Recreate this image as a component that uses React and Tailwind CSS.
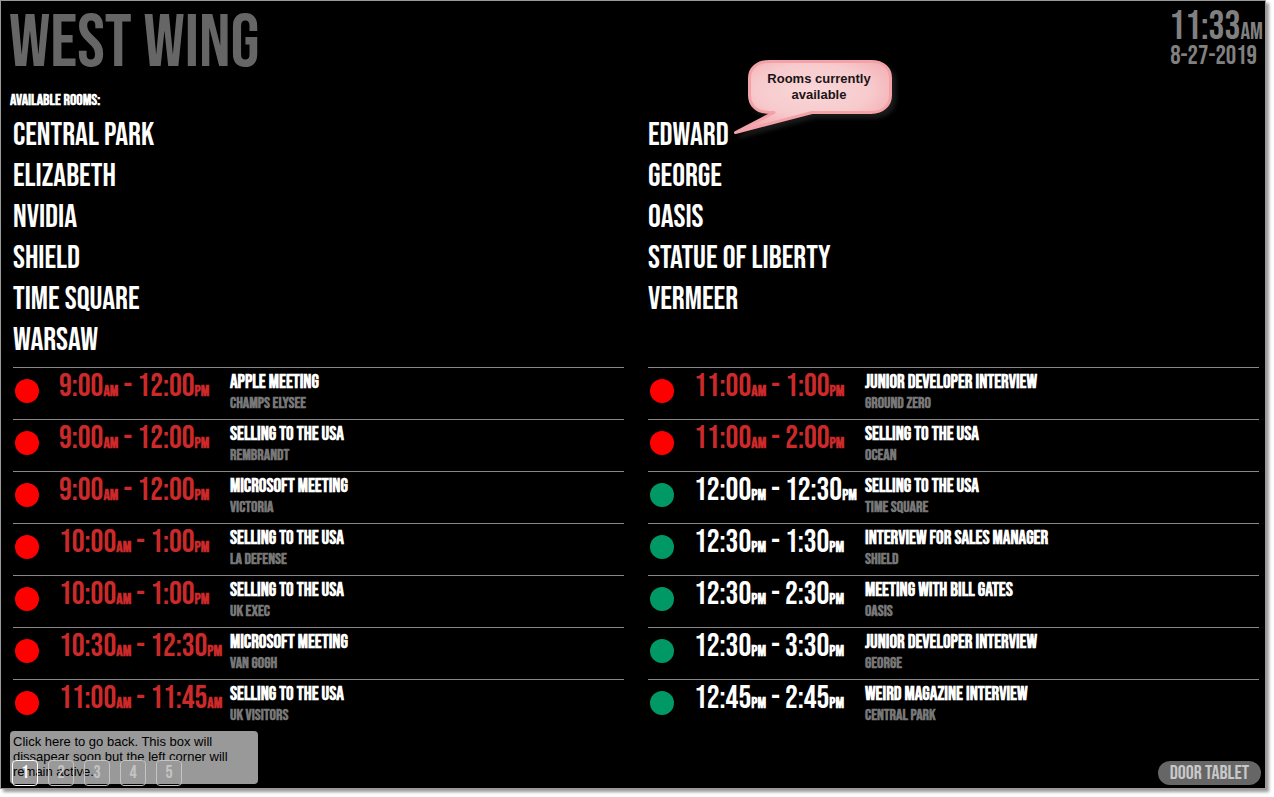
const availableRooms = [
  ['Central Park', 'Elizabeth', 'Nvidia', 'Shield', 'Time Square', 'Warsaw'],
  ['Edward', 'George', 'Oasis', 'Statue of Liberty', 'Vermeer'],
];

const meetings = [
  [
    { from: '9:00', fromHalf: 'AM', to: '12:00', toHalf: 'PM', title: 'Apple Meeting', room: 'Champs Elysee', active: true },
    { from: '9:00', fromHalf: 'AM', to: '12:00', toHalf: 'PM', title: 'Selling to the USA', room: 'Rembrandt', active: true },
    { from: '9:00', fromHalf: 'AM', to: '12:00', toHalf: 'PM', title: 'Microsoft Meeting', room: 'Victoria', active: true },
    { from: '10:00', fromHalf: 'AM', to: '1:00', toHalf: 'PM', title: 'Selling to the USA', room: 'La Defense', active: true },
    { from: '10:00', fromHalf: 'AM', to: '1:00', toHalf: 'PM', title: 'Selling to the USA', room: 'UK Exec', active: true },
    { from: '10:30', fromHalf: 'AM', to: '12:30', toHalf: 'PM', title: 'Microsoft Meeting', room: 'Van Gogh', active: true },
    { from: '11:00', fromHalf: 'AM', to: '11:45', toHalf: 'AM', title: 'Selling to the USA', room: 'UK Visitors', active: true },
  ],
  [
    { from: '11:00', fromHalf: 'AM', to: '1:00', toHalf: 'PM', title: 'Junior Developer Interview', room: 'Ground Zero', active: true },
    { from: '11:00', fromHalf: 'AM', to: '2:00', toHalf: 'PM', title: 'Selling to the USA', room: 'Ocean', active: true },
    { from: '12:00', fromHalf: 'PM', to: '12:30', toHalf: 'PM', title: 'Selling to the USA', room: 'Time Square', active: false },
    { from: '12:30', fromHalf: 'PM', to: '1:30', toHalf: 'PM', title: 'Interview for Sales Manager', room: 'Shield', active: false },
    { from: '12:30', fromHalf: 'PM', to: '2:30', toHalf: 'PM', title: 'Meeting with Bill Gates', room: 'Oasis', active: false },
    { from: '12:30', fromHalf: 'PM', to: '3:30', toHalf: 'PM', title: 'Junior Developer Interview', room: 'George', active: false },
    { from: '12:45', fromHalf: 'PM', to: '2:45', toHalf: 'PM', title: 'Weird Magazine Interview', room: 'Central Park', active: false },
  ],
];

function Callout() {
  return (
    <div className="absolute -top-[55px] left-[86px] h-[80px] w-[170px]">
      <svg className="absolute inset-0" width="170" height="80" viewBox="0 0 170 80" aria-hidden="true">
        <defs>
          <radialGradient id="bubble" cx="50%" cy="40%" r="60%">
            <stop offset="0" stopColor="#f9d6d8" />
            <stop offset="0.6" stopColor="#f7cbcd" />
            <stop offset="1" stopColor="#f4aeb3" />
          </radialGradient>
          <filter id="bubbleShadow" x="-10%" y="-10%" width="130%" height="130%">
            <feDropShadow dx="4" dy="4" stdDeviation="2" floodColor="#555" floodOpacity="0.3" />
          </filter>
        </defs>
        <path
          d="M36 1.500H137C150 1.500 156.500 9 156.500 18V35C156.500 45 149 52.500 137 52.500H78L1.500 72.500L40 52.500H36C22 52.500 15.500 45 15.500 35V18C15.500 9 22 1.500 36 1.500Z"
          fill="url(#bubble)"
          stroke="#f3a3a8"
          strokeWidth="3"
          strokeLinejoin="round"
          filter="url(#bubbleShadow)"
        />
      </svg>
      <p className="relative pt-[11px] text-center font-['Liberation_Sans',Arial,sans-serif] text-[13px] leading-4 font-bold text-[#1c1416] normal-case">
        Rooms currently
        <br />
        available
      </p>
    </div>
  );
}

function Meeting({ item }) {
  return (
    <li className="flex h-[52px] border-t border-[#888]">
      <span
        className={`mt-[11px] ml-0.5 size-6 shrink-0 rounded-full ${item.active ? 'bg-[#ff0000]' : 'bg-[#009966]'}`}
      />
      <p
        className={`ml-5 w-[171px] shrink-0 text-[32px] leading-[38px] whitespace-nowrap ${item.active ? 'text-[#cc2a2a]' : 'text-white'}`}
      >
        {item.from}
        <span className="text-base leading-none font-bold">{item.fromHalf}</span> - {item.to}
        <span className="text-base leading-none font-bold">{item.toHalf}</span>
      </p>
      <div className="min-w-0 pt-1">
        <h3 className="text-[19px] leading-[22px] font-bold">{item.title}</h3>
        <p className="text-base leading-5 font-bold text-[#777]">{item.room}</p>
      </div>
    </li>
  );
}

export default function App() {
  return (
    <div className="bg-white pr-2 pb-2">
      <main className="flex flex-col border border-[#999] bg-black font-['Bebas_Neue','Open_Sans_Condensed',sans-serif] text-white uppercase shadow-[3px_3px_3px_#999]">
        <header className="flex justify-between pr-0.5 pl-2">
          <h1 className="pt-1 text-[74px] leading-[78px] text-[#666]">West Wing</h1>
          <div className="pt-1.5 text-[#808080]">
            <p className="text-[40px] leading-10">
              11:33<span className="text-2xl leading-none">AM</span>
            </p>
            <p className="pr-1.5 text-right text-[26px] leading-5">8-27-2019</p>
          </div>
        </header>

        <section className="pt-1.5">
          <h2 className="pl-[9px] text-base leading-6 font-bold">Available rooms:</h2>
          <div className="grid grid-cols-2 gap-6 pt-0.5 pr-1.5 pl-3">
            {availableRooms.map((rooms, column) => (
              <ul key={column} className="text-[32px] leading-[41px]">
                {rooms.map((room) => (
                  <li key={room} className="relative">
                    {room}
                    {room === 'Edward' && <Callout />}
                  </li>
                ))}
              </ul>
            ))}
          </div>
        </section>

        <section className="grid grid-cols-2 gap-6 pt-1.5 pr-1.5 pl-3">
          {meetings.map((items, column) => (
            <ul key={column}>
              {items.map((item, index) => (
                <Meeting key={index} item={item} />
              ))}
            </ul>
          ))}
        </section>

        <footer className="relative flex items-end justify-between pr-1 pb-0.5 pl-[11px]">
          <button
            type="button"
            className="absolute bottom-1 left-[9px] flex h-[53px] w-[248px] items-start rounded bg-[#999] px-[3px] pt-[3px] text-left font-['Liberation_Sans',Arial,sans-serif] text-[13px] leading-[15px] text-black normal-case"
          >
            Click here to go back. This box will dissapear soon but the left corner will remain active.
          </button>
          <nav className="relative flex gap-2.5 pt-[29px]" aria-label="Pages">
            {[1, 2, 3, 4, 5].map((page) => (
              <button
                key={page}
                type="button"
                className={`size-[26px] rounded border text-lg leading-6 ${page === 1 ? 'border-white text-white' : 'border-[#c4c4c4] text-[#c4c4c4]'}`}
              >
                {page}
              </button>
            ))}
          </nav>
          <a href="#door-tablet" className="mb-px rounded-full bg-[#666] px-3 text-xl leading-6 text-[#c8c8c8]">
            Door Tablet
          </a>
        </footer>
      </main>
    </div>
  );
}
